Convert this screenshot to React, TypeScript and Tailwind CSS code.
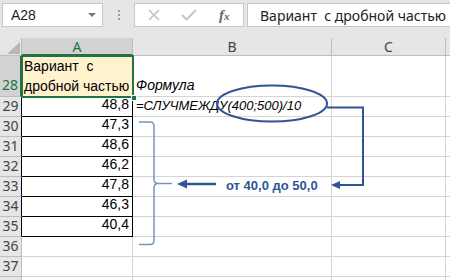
import React from 'react';

const GRID = 'border-[#d4d4d4]';

type Row = { n?: number; a?: string; b?: React.ReactNode; boxed?: boolean };

const ROWS: Row[] = [
  { n: 29, a: '48,8', boxed: true, b: <span className="italic text-[13px]">=СЛУЧМЕЖДУ(400;500)/10</span> },
  { n: 30, a: '47,3', boxed: true },
  { n: 31, a: '48,6', boxed: true },
  { n: 32, a: '46,2', boxed: true },
  {
    n: 33,
    a: '47,8',
    boxed: true,
    b: <span className="pl-[90px] text-[13px] font-bold text-[#2f5597]">от 40,0 до 50,0</span>,
  },
  { n: 34, a: '46,3', boxed: true },
  { n: 35, a: '40,4', boxed: true },
  { n: 36 },
  { n: 37 },
  {},
];

function Toolbar() {
  return (
    <div className="flex h-[38px] items-start bg-[#e6e6e6] pt-[3px] pl-[2px]">
      {/* name box */}
      <div className="flex h-[24px] w-[101px] items-center justify-between border border-[#c6c6c6] bg-white pl-[8px] pr-[6px] text-[14px] text-[#222]">
        <span>A28</span>
        <span className="h-0 w-0 border-x-[4px] border-t-[4px] border-x-transparent border-t-[#777]" />
      </div>
      <div className="flex w-[31px] flex-col items-center gap-[2px] pt-[7px]">
        <span className="h-[2px] w-[2px] bg-[#9e9e9e]" />
        <span className="h-[2px] w-[2px] bg-[#9e9e9e]" />
        <span className="h-[2px] w-[2px] bg-[#9e9e9e]" />
      </div>
      {/* cancel / enter / fx */}
      <div className="flex h-[24px] w-[110px] items-center border border-[#c6c6c6] bg-white pl-[13px]">
        <svg width="12" height="12" viewBox="0 0 12 12" className="mr-[21px]">
          <path d="M1 1L11 11M11 1L1 11" stroke="#c2c2c2" strokeWidth="1.6" />
        </svg>
        <svg width="16" height="12" viewBox="0 0 16 12" className="mr-[22px]">
          <path d="M1 6l4.5 4.5L15 1" stroke="#c2c2c2" strokeWidth="1.8" fill="none" />
        </svg>
        <span className="font-['Liberation_Serif',serif] text-[15px] font-bold italic text-[#666]">
          f<span className="text-[11px]">x</span>
        </span>
      </div>
      <div className="ml-[3px] flex h-[24px] flex-1 items-center border border-r-0 border-[#c6c6c6] bg-white pl-[12px] font-['Noto_Sans',sans-serif] text-[14px] text-[#222]">
        Вариант&nbsp; с дробной частью
      </div>
    </div>
  );
}

function HeaderRow() {
  return (
    <div className="flex h-[18px] font-['Noto_Sans',sans-serif] text-[14px] text-[#444]">
      <div className="relative w-[22px] border-r border-b border-[#bdbdbd] bg-[#e6e6e6]">
        <svg width="22" height="18" className="absolute inset-0">
          <polygon points="7,16 20,16 20,4" fill="#b7b7b7" />
        </svg>
      </div>
      <div className="flex w-[111px] items-center justify-center border-r border-b-2 border-r-[#bdbdbd] border-b-[#217346] bg-[#d2d2d2] text-[#217346]">
        A
      </div>
      <div className="flex w-[199px] items-center justify-center border-r border-b border-[#bdbdbd] bg-[#e6e6e6]">
        B
      </div>
      <div className="flex w-[114px] items-center justify-center border-r border-b border-[#bdbdbd] bg-[#e6e6e6]">
        C
      </div>
      <div className="flex-1 border-b border-[#bdbdbd] bg-[#e6e6e6]" />
    </div>
  );
}

function Row28() {
  return (
    <div className="flex h-[41px] leading-[20px]">
      <div className="flex w-[22px] items-end justify-center border-r-2 border-b border-r-[#217346] border-b-[#bdbdbd] bg-[#d2d2d2] pb-[1px] font-['Noto_Sans',sans-serif] text-[14px] text-[#217346]">
        28
      </div>
      <div className="relative flex w-[111px] items-end bg-[#fff2cc] pb-[1px] pl-[2px]">
        <span>
          Вариант&nbsp; с<br />
          дробной частью
        </span>
        <div className="absolute -top-px -left-px -right-px -bottom-px border-2 border-[#217346]" />
        <div className="absolute -right-[4px] -bottom-[4px] h-[6px] w-[6px] border border-white bg-[#217346]" />
      </div>
      <div className={`flex w-[199px] items-end border-r border-b ${GRID} pb-[1px] pl-[3px] italic`}>
        Формула
      </div>
      <div className={`w-[114px] border-r border-b ${GRID}`} />
      <div className={`flex-1 border-b ${GRID}`} />
    </div>
  );
}

function DataRow({ row }: { row: Row }) {
  return (
    <div className="flex h-[20px]">
      <div
        className={`flex w-[22px] items-end justify-center border-r border-b bg-[#e6e6e6] pb-[1px] font-['Noto_Sans',sans-serif] text-[14px] leading-[18px] text-[#444] ${
          row.boxed ? 'border-r-black border-b-[#bdbdbd]' : 'border-[#bdbdbd]'
        }`}
      >
        {row.n}
      </div>
      <div
        className={`flex w-[111px] items-end justify-end border-r border-b pb-[1px] pr-[3px] ${
          row.boxed ? 'border-black' : GRID
        }`}
      >
        {row.a}
      </div>
      <div className={`flex w-[199px] items-end whitespace-nowrap border-r border-b ${GRID} pb-[1px] pl-[3px]`}>
        {row.b}
      </div>
      <div className={`w-[114px] border-r border-b ${GRID}`} />
      <div className={`flex-1 border-b ${GRID}`} />
    </div>
  );
}

function Annotations() {
  return (
    <svg width="450" height="280" className="pointer-events-none absolute top-0 left-0">
      <ellipse cx="272" cy="103.5" rx="55" ry="18" fill="none" stroke="#2f5597" strokeWidth="2" />
      {/* connector ellipse -> label */}
      <path d="M327 107.5H363V185H338" fill="none" stroke="#2f5597" strokeWidth="2" />
      <polygon points="331,185 340,181 340,189" fill="#2f5597" />
      {/* arrow to brace */}
      <path d="M216 184H184" stroke="#2f5597" strokeWidth="2.5" />
      <polygon points="177,184 187,179.5 187,188.5" fill="#2f5597" />
      {/* brace */}
      <path
        d="M139 122H150Q154 122 154 126V179Q154 183.5 158 183.5H172M158 183.5Q154 183.5 154 188V240Q154 244.5 150 244.5H139"
        fill="none"
        stroke="#7892c2"
        strokeWidth="1.5"
      />
    </svg>
  );
}

export default function App() {
  return (
    <div className="relative h-[280px] w-[450px] overflow-hidden bg-white font-['Liberation_Sans',sans-serif] text-[14px] text-black">
      <Toolbar />
      <HeaderRow />
      <Row28 />
      {ROWS.map((r, i) => (
        <DataRow key={i} row={r} />
      ))}
      <Annotations />
    </div>
  );
}
